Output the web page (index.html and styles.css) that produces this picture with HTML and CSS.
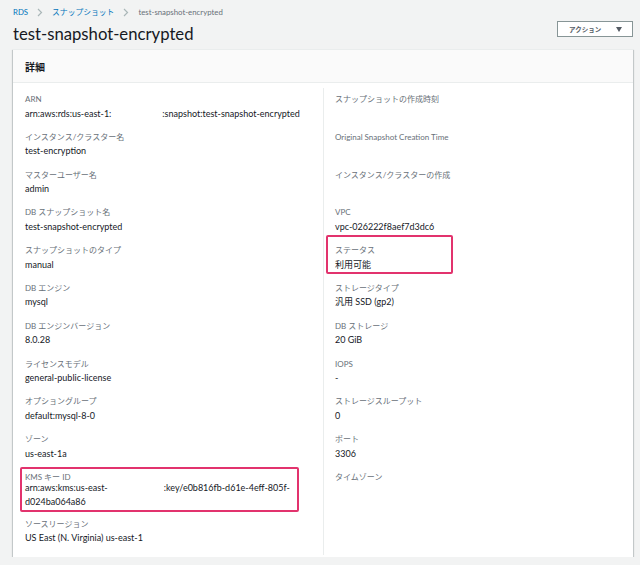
FILE: index.html
```html
<!DOCTYPE html>
<html lang="ja">
<head>
    <meta charset="UTF-8">
    <meta name="viewport" content="width=device-width, initial-scale=1.0">
    <title>test-snapshot-encrypted</title>
    <link rel="stylesheet" href="styles.css">
</head>
<body>
    <!-- Breadcrumb -->
    <nav class="breadcrumb">
        <a href="#">RDS</a>
        <svg class="chevron" width="6" height="9" viewBox="0 0 6 9"><path d="M1 1l3.5 3.5L1 8" fill="none" stroke="#aab7b8" stroke-width="1.2"/></svg>
        <a href="#">スナップショット</a>
        <svg class="chevron" width="6" height="9" viewBox="0 0 6 9"><path d="M1 1l3.5 3.5L1 8" fill="none" stroke="#aab7b8" stroke-width="1.2"/></svg>
        <span class="current">test-snapshot-encrypted</span>
    </nav>

    <div class="page-header">
        <h1>test-snapshot-encrypted</h1>
        <button class="actions">アクション <span class="caret"></span></button>
    </div>

    <!-- Details card -->
    <section class="card">
        <div class="card-header">詳細</div>
        <div class="card-body">
            <div class="column">
                <div class="item">
                    <div class="label">ARN</div>
                    <div class="value">arn:aws:rds:us-east-1:<span class="masked arn-gap"></span>:snapshot:test-snapshot-encrypted</div>
                </div>
                <div class="item">
                    <div class="label">インスタンス/クラスター名</div>
                    <div class="value">test-encryption</div>
                </div>
                <div class="item">
                    <div class="label">マスターユーザー名</div>
                    <div class="value">admin</div>
                </div>
                <div class="item">
                    <div class="label">DB スナップショット名</div>
                    <div class="value">test-snapshot-encrypted</div>
                </div>
                <div class="item">
                    <div class="label">スナップショットのタイプ</div>
                    <div class="value">manual</div>
                </div>
                <div class="item">
                    <div class="label">DB エンジン</div>
                    <div class="value">mysql</div>
                </div>
                <div class="item">
                    <div class="label">DB エンジンバージョン</div>
                    <div class="value">8.0.28</div>
                </div>
                <div class="item">
                    <div class="label">ライセンスモデル</div>
                    <div class="value">general-public-license</div>
                </div>
                <div class="item">
                    <div class="label">オプショングループ</div>
                    <div class="value">default:mysql-8-0</div>
                </div>
                <div class="item">
                    <div class="label">ゾーン</div>
                    <div class="value">us-east-1a</div>
                </div>
                <div class="item marked mark-kms">
                    <div class="label">KMS キー ID</div>
                    <div class="value">arn:aws:kms:us-east-<span class="masked kms-gap"></span>:key/e0b816fb-d61e-4eff-805f-<br>d024ba064a86</div>
                </div>
                <div class="item">
                    <div class="label">ソースリージョン</div>
                    <div class="value">US East (N. Virginia) us-east-1</div>
                </div>
            </div>

            <div class="column">
                <div class="item">
                    <div class="label">スナップショットの作成時刻</div>
                    <div class="value"></div>
                </div>
                <div class="item">
                    <div class="label">Original Snapshot Creation Time</div>
                    <div class="value"></div>
                </div>
                <div class="item">
                    <div class="label">インスタンス/クラスターの作成</div>
                    <div class="value"></div>
                </div>
                <div class="item">
                    <div class="label">VPC</div>
                    <div class="value">vpc-026222f8aef7d3dc6</div>
                </div>
                <div class="item marked mark-status">
                    <div class="label">ステータス</div>
                    <div class="value">利用可能</div>
                </div>
                <div class="item">
                    <div class="label">ストレージタイプ</div>
                    <div class="value">汎用 SSD (gp2)</div>
                </div>
                <div class="item">
                    <div class="label">DB ストレージ</div>
                    <div class="value">20 GiB</div>
                </div>
                <div class="item">
                    <div class="label">IOPS</div>
                    <div class="value">-</div>
                </div>
                <div class="item">
                    <div class="label">ストレージスループット</div>
                    <div class="value">0</div>
                </div>
                <div class="item">
                    <div class="label">ポート</div>
                    <div class="value">3306</div>
                </div>
                <div class="item">
                    <div class="label">タイムゾーン</div>
                    <div class="value"></div>
                </div>
            </div>
        </div>
    </section>
</body>
</html>
```

FILE: styles.css
```css
body {
    margin: 0;
    padding: 0 7px 0 13px;
    background-color: #f2f3f3;
    font-family: Lato, "Noto Sans CJK JP", sans-serif;
    color: #16191f;
}
.breadcrumb {
    display: flex;
    align-items: center;
    gap: 7px;
    padding-top: 6px;
    height: 12px;
    font-size: 7.8px;
    line-height: 12px;
}
.breadcrumb a {
    color: #0073bb;
    text-decoration: none;
}
.breadcrumb .current {
    color: #687078;
}
.chevron {
    display: block;
    margin: 0 2px;
}
.page-header {
    display: flex;
    justify-content: space-between;
    align-items: flex-start;
    height: 31px;
}
h1 {
    margin: 5px 0 0 0;
    font-size: 16.7px;
    line-height: 22px;
    font-weight: normal;
}
.actions {
    margin-top: 3px;
    width: 76px;
    height: 16px;
    padding: 0 0 0 11px;
    display: flex;
    align-items: center;
    background-color: white;
    border: 1px solid #879596;
    color: #545b64;
    font-family: inherit;
    font-size: 6.5px;
    font-weight: bold;
    cursor: pointer;
}
.caret {
    margin-left: 15px;
    width: 0;
    height: 0;
    border-left: 3.5px solid transparent;
    border-right: 3.5px solid transparent;
    border-top: 5px solid #545b64;
}
.card {
    background-color: white;
    box-shadow: 0 1px 1px 0 rgba(0, 28, 36, 0.3), 1px 1px 1px 0 rgba(0, 28, 36, 0.15), -1px 1px 1px 0 rgba(0, 28, 36, 0.15);
}
.card-header {
    height: 34px;
    padding: 0 12px;
    display: flex;
    align-items: center;
    background-color: #fafafa;
    border-top: 1px solid #eaeded;
    border-bottom: 1px solid #eaeded;
    box-sizing: border-box;
    font-size: 10px;
    font-weight: bold;
}
.card-body {
    display: grid;
    grid-template-columns: 310px 1fr;
    padding-bottom: 2px;
}
.column {
    padding: 9px 12px 0 12px;
}
.column + .column {
    border-left: 1px solid #eaeded;
    margin-top: 5px;
    padding-top: 4px;
    padding-left: 11px;
}
.item {
    margin-bottom: 8.8px;
}
.label {
    color: #687078;
    font-size: 8px;
    line-height: 14.5px;
}
.value {
    min-height: 14.5px;
    font-size: 9px;
    line-height: 14.5px;
}
.masked {
    display: inline-block;
}
.arn-gap {
    width: 51px;
}
.kms-gap {
    width: 56px;
}
.mark-kms {
    margin-bottom: 7px;
}
.mark-kms .value {
    margin-top: -3.5px;
}

/* annotation boxes drawn over the screenshot */
.marked {
    position: relative;
}
.marked::after {
    content: "";
    position: absolute;
    border: 2.5px solid #e2336d;
    border-radius: 2px;
}
.mark-status::after {
    left: -9px;
    top: -8px;
    width: 123px;
    height: 35px;
}
.mark-kms::after {
    left: -5px;
    top: -3px;
    width: 275px;
    height: 41px;
}
```
